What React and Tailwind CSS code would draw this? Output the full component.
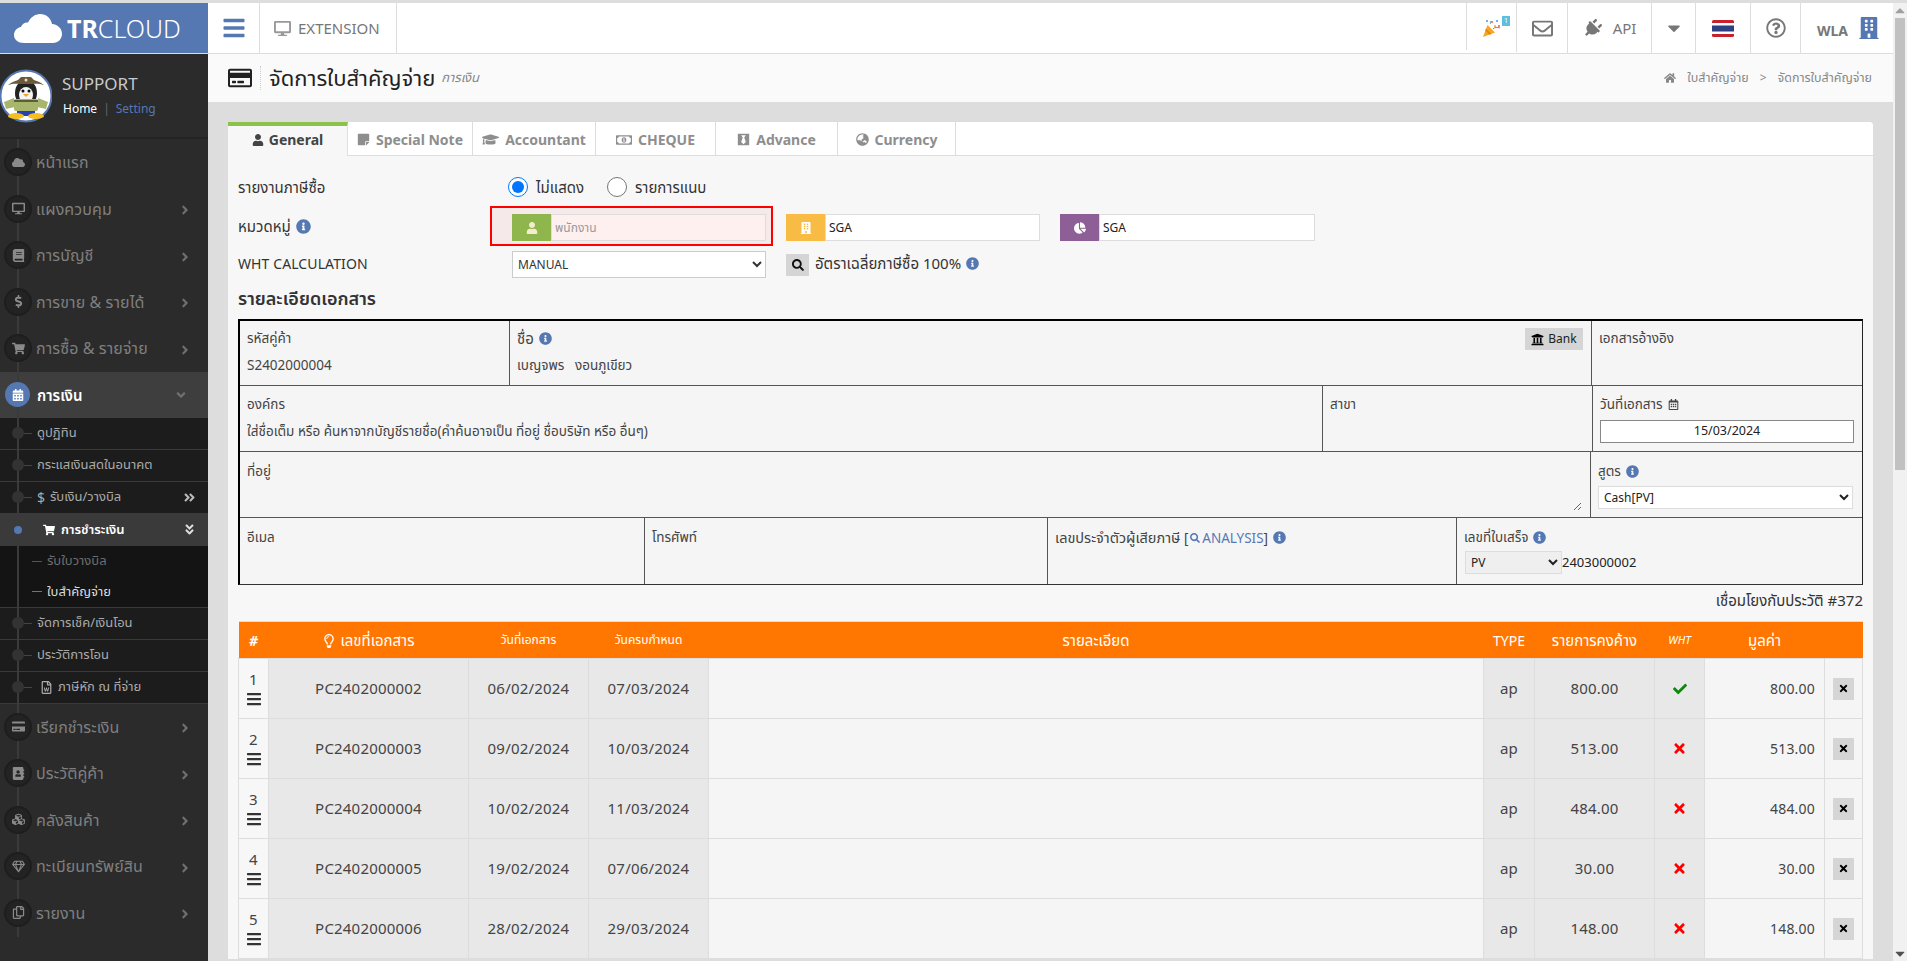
import React from 'react';
import {
  FaCloud, FaDesktop, FaBook, FaDollarSign, FaShoppingCart, FaCalendarAlt, FaCreditCard, FaRegCreditCard,
  FaAddressBook, FaCubes, FaRegGem, FaRegCopy, FaRegFileWord, FaAngleRight, FaAngleDown, FaAngleDoubleRight,
  FaAngleDoubleDown, FaBars, FaRegEnvelope, FaPlug, FaCaretDown, FaCaretUp, FaRegQuestionCircle, FaBuilding, FaHome,
  FaUser, FaStickyNote, FaGraduationCap, FaRegMoneyBillAlt, FaBlackTie, FaGlobeAsia, FaInfoCircle, FaChartPie,
  FaSearch, FaUniversity, FaRegCalendarAlt, FaRegLightbulb, FaCheck, FaTimes,
} from 'react-icons/fa';

const Logo = () => (
  <svg width="48" height="29" viewBox="0 0 48 29" fill="#fff">
    <path d="M10 29C4 29 0 25.5 0 21c0-4 3-7.500 7-8 1-3 4-5 7-4.500C16.500 3.500 21 0 26 0c6 0 11 4 12 10 6 .5 10 4.500 10 10 0 5-4 9-9 9z" />
  </svg>
);

const Penguin = () => (
  <svg width="52" height="54" viewBox="0 0 52 54" className="shrink-0">
    <circle cx="26" cy="27" r="25.500" fill="#fff" stroke="#5577b2" strokeWidth="2" />
    <ellipse cx="26" cy="24" rx="11" ry="13" fill="#222" />
    <ellipse cx="26" cy="26" rx="7" ry="8" fill="#f5f5f5" />
    <circle cx="23" cy="22" r="1.500" fill="#111" />
    <circle cx="29" cy="22" r="1.500" fill="#111" />
    <path d="M23 25h6l-3 3z" fill="#f4a020" />
    <path d="M8 16c6-2 7-1 18-1s12-1 18 1c-5-4-8-4-10-5l-3-3h-10l-3 3c-2 1-5 1-10 5z" fill="#6b5a3a" />
    <circle cx="26" cy="11" r="1.500" fill="#e8e0c0" />
    <rect x="14" y="30" width="24" height="12" rx="2" fill="#a8b56d" />
    <path d="M4 33l10-4 1 9-9 2zM48 33l-10-4-1 9 9 2z" fill="#a8b56d" />
    <rect x="14" y="31" width="24" height="2" fill="#5a6030" />
    <rect x="17" y="42" width="18" height="5" fill="#2541b2" />
    <ellipse cx="16" cy="47" rx="8" ry="3" fill="#f4c020" />
    <ellipse cx="36" cy="47" rx="8" ry="3" fill="#f4c020" />
  </svg>
);

const Party = () => (
  <svg width="18" height="18" viewBox="0 0 18 18">
    <path d="M0 18l4.500-12 7.500 7.500z" fill="#f5a623" />
    <path d="M3 9.500l5.500 5.500-2 .8-4.300-4.300z" fill="#e8831a" />
    <circle cx="4" cy="2" r="1" fill="#3b9be8" />
    <circle cx="9" cy="3" r="1" fill="#e85a4f" />
    <circle cx="14" cy="2" r="1" fill="#3b9be8" />
    <circle cx="16" cy="7" r="1" fill="#e85a4f" />
    <circle cx="12" cy="7" r="1" fill="#f5a623" />
    <path d="M10 10c2-2 4-2 7-1" stroke="#e85a4f" fill="none" strokeWidth="1" />
    <path d="M7 5c1-1 1-2 0-3" stroke="#3b9be8" fill="none" strokeWidth="1" />
  </svg>
);

const Flag = () => (
  <svg width="22" height="17" viewBox="0 0 22 17">
    <rect width="22" height="17" rx="1.500" fill="#c8202c" />
    <rect y="3" width="22" height="11" fill="#fff" />
    <rect y="5.500" width="22" height="6" fill="#2c3f80" />
  </svg>
);

const mainMenu1 = [
  { t: 'หน้าแรก', I: FaCloud, arrow: false },
  { t: 'แผงควบคุม', I: FaDesktop, arrow: true },
  { t: 'การบัญชี', I: FaBook, arrow: true },
  { t: 'การขาย & รายได้', I: FaDollarSign, arrow: true },
  { t: 'การซื้อ & รายจ่าย', I: FaShoppingCart, arrow: true },
];
const mainMenu2 = [
  { t: 'เรียกชำระเงิน', I: FaCreditCard },
  { t: 'ประวัติคู่ค้า', I: FaAddressBook },
  { t: 'คลังสินค้า', I: FaCubes },
  { t: 'ทะเบียนทรัพย์สิน', I: FaRegGem },
  { t: 'รายงาน', I: FaRegCopy },
];

const MenuRow = ({ t, I, arrow = true }) => (
  <div className="h-[46.5px] flex items-center pl-[4px] pr-[16px]">
    <span className="relative z-10 w-[28px] h-[28px] rounded-full bg-[#232323] border-2 border-[#1e1e1e] flex items-center justify-center text-[#8a8a8a] text-[13px] shrink-0">
      <I />
    </span>
    <span className="ml-[4px] flex-1 text-[16px] text-[#7f7f7f] tracking-[0.1px]">{t}</span>
    {arrow && <FaAngleRight className="text-[#6f6f6f] text-[14px] mt-[3px]" />}
  </div>
);

const Dot = () => (
  <>
    <span className="relative z-10 ml-[12px] w-[12px] h-[12px] rounded-full bg-[#333] shrink-0" />
    <span className="w-[8px] h-px bg-[#444] mr-[5px] shrink-0" />
  </>
);

const SubRow = ({ children, extra }) => (
  <div className="h-[32px] flex items-center border-b border-[#3a3a3a] bg-[#1c1c1c] text-[#ababab] text-[13px] pr-[12px]">
    <Dot />
    <span className="flex-1 flex items-center">{children}</span>
    {extra}
  </div>
);

const Sidebar = () => (
  <aside className="w-[208px] bg-[#2b2b2b] shrink-0 relative h-full">
    <div className="h-[85px] flex items-center border-b-[2px] border-[#232323]">
      <Penguin />
      <div className="ml-[10px]">
        <div className="text-[#c9c9c9] text-[17px] leading-[22px]">SUPPORT</div>
        <div className="text-[12px] mt-[5px] leading-[18px] ml-[1px]">
          <span className="text-white">Home</span>
          <span className="text-[#666] mx-[6px]">|</span>
          <span className="text-[#5578b3]">Setting</span>
        </div>
      </div>
    </div>
    <div className="relative">
      <span className="absolute left-[17px] top-0 w-[2px] h-[798px] bg-[#3a3a3a]" />
      {mainMenu1.map((m) => <MenuRow key={m.t} {...m} />)}
      <div className="h-[46px] bg-[#3e3e3e] flex items-center pl-[5px] pr-[20px]">
        <span className="relative z-10 w-[25px] h-[25px] rounded-full bg-[#5578b3] flex items-center justify-center text-white text-[12px]">
          <FaCalendarAlt />
        </span>
        <span className="ml-[7px] flex-1 text-white text-[15px] font-semibold pt-[2px]">การเงิน</span>
        <FaAngleDown className="text-[#6f6f6f] text-[14px]" />
      </div>
      <SubRow>ดูปฏิทิน</SubRow>
      <SubRow>กระแสเงินสดในอนาคต</SubRow>
      <SubRow extra={<FaAngleDoubleRight className="text-[#bbb] text-[13px]" />}>
        <span className="mr-[5px] text-[14px]">$</span>รับเงิน/วางบิล
      </SubRow>
      <div className="h-[32px] bg-[#3a3a3a] flex items-center text-white text-[13px] pr-[12px] font-semibold">
        <span className="relative z-10 ml-[14px] w-[8px] h-[8px] rounded-full bg-[#5578b3]" />
        <FaShoppingCart className="ml-[21px] text-[12px]" />
        <span className="ml-[6px] flex-1">การชำระเงิน</span>
        <FaAngleDoubleDown className="text-[#ddd] text-[13px]" />
      </div>
      <div className="bg-[#141414] border-b border-[#3a3a3a]">
        <div className="h-[31px] flex items-center text-[13px] text-[#6f6f6f] pl-[32px]">
          <span className="w-[10px] h-px bg-[#555] mr-[5px]" />รับใบวางบิล
        </div>
        <div className="h-[30px] flex items-center text-[13px] text-[#ddd] pl-[32px]">
          <span className="w-[10px] h-px bg-[#5578b3] mr-[5px]" />ใบสำคัญจ่าย
        </div>
      </div>
      <SubRow>จัดการเช็ค/เงินโอน</SubRow>
      <SubRow>ประวัติการโอน</SubRow>
      <SubRow>
        <FaRegFileWord className="ml-[3px] mr-[5px] text-[13px]" />ภาษีหัก ณ ที่จ่าย
      </SubRow>
      <div>
        {mainMenu2.map((m) => <MenuRow key={m.t} {...m} />)}
      </div>
    </div>
  </aside>
);

const HCell = ({ className, children }) => (
  <div className={`h-[50px] border-r border-[#ddd] flex items-center justify-center text-[#777] ${className}`}>{children}</div>
);

const Header = () => (
  <header className="h-[51px] flex border-b border-[#ddd] bg-white shrink-0">
    <div className="w-[208px] bg-[#5578b3] h-[50px] flex items-center pl-[14px] shrink-0">
      <Logo />
      <span className="ml-[5px] text-white text-[25px] leading-none font-light"><b className="font-bold">TR</b>CLOUD</span>
    </div>
    <div className="w-[52px] h-[50px] border-r border-[#ddd] flex items-center justify-center text-[#5578b3] text-[24px] shrink-0">
      <FaBars />
    </div>
    <div className="w-[137px] h-[50px] border-r border-[#ddd] flex items-center pl-[14px] text-[#777] text-[15px] shrink-0">
      <FaDesktop className="text-[17px] mr-[7px] text-[#999]" />EXTENSION
    </div>
    <div className="flex-1 border-r border-[#ddd] h-[47px]" />
    <div className="w-[50px] h-[49px] border-r border-[#ddd] relative flex items-center justify-center">
      <Party />
      <span className="absolute left-[35px] top-[13px] w-[8px] h-[10px] bg-[#5bc0de] text-white text-[7px] leading-[10px] text-center">1</span>
    </div>
    <HCell className="w-[51px] text-[21px]"><FaRegEnvelope /></HCell>
    <HCell className="w-[84px] text-[15px]"><FaPlug className="text-[19px] mr-[11px] rotate-45" />API</HCell>
    <HCell className="w-[44px] text-[20px]"><FaCaretDown /></HCell>
    <HCell className="w-[55px]"><Flag /></HCell>
    <HCell className="w-[50px] text-[20px]"><FaRegQuestionCircle /></HCell>
    <div className="w-[92px] h-[50px] flex items-center pl-[16px] text-[#777]">
      <span className="text-[14px] font-bold mt-[4px]">WLA</span>
      <FaBuilding className="ml-[10px] text-[22px] text-[#5578b3]" />
    </div>
  </header>
);

const Title = () => (
  <div className="h-[48px] bg-[#fafafa] flex items-center pl-[20px] pr-[21px] shrink-0">
    <FaRegCreditCard className="text-[24px] text-[#222]" />
    <span className="ml-[8px] h-[24px] border-l border-dotted border-[#ccc]" />
    <span className="ml-[8px] text-[22px] text-[#222] pb-[2px]">จัดการใบสำคัญจ่าย</span>
    <span className="ml-[6px] text-[13px] italic text-[#888]">การเงิน</span>
    <span className="flex-1" />
    <FaHome className="text-[12px] text-[#888]" />
    <span className="ml-[11px] text-[12.5px] text-[#888]">ใบสำคัญจ่าย</span>
    <span className="mx-[11px] text-[12px] text-[#888]">&gt;</span>
    <span className="text-[12.5px] text-[#888]">จัดการใบสำคัญจ่าย</span>
  </div>
);

const tabs = [
  { t: 'Special Note', I: FaStickyNote, w: 'w-[125px]', ic: 'text-[13px]' },
  { t: 'Accountant', I: FaGraduationCap, w: 'w-[123px]', ic: 'text-[17px]' },
  { t: 'CHEQUE', I: FaRegMoneyBillAlt, w: 'w-[120px]', ic: 'text-[16px]' },
  { t: 'Advance', I: FaBlackTie, w: 'w-[122px]', ic: 'text-[13px]' },
  { t: 'Currency', I: FaGlobeAsia, w: 'w-[118px]', ic: 'text-[13px]' },
];

const Tabs = () => (
  <div className="flex h-[34px]">
    <div className="w-[120px] border-t-[4px] border-[#8bc34a] border-r border-r-[#e0e0e0] flex items-center justify-center gap-[5px] pb-[3px] text-[14px] font-bold text-[#444] bg-[#f7f7f7]">
      <FaUser className="text-[12px]" />General
    </div>
    {tabs.map(({ t, I, w, ic }) => (
      <div key={t} className={`${w} border-r border-b border-[#ddd] bg-white flex items-center justify-center gap-[6px] pt-[2px] text-[14px] font-bold text-[#8e8e8e]`}>
        <I className={ic} />{t}
      </div>
    ))}
    <div className="flex-1 border-b border-[#ddd] bg-white rounded-tr-[4px]" />
  </div>
);

const Info = ({ className = '' }) => <FaInfoCircle className={`inline-block text-[#5578b3] text-[13px] ${className}`} />;

const InputGroup = ({ color, I, value, placeholder, w, pink, iconCls = 'text-white' }) => (
  <div className={`flex h-[27px] ${w}`}>
    <span className={`${color} w-[39px] shrink-0 flex items-center justify-center ${iconCls} text-[12px]`}><I /></span>
    <div className={`flex-1 border border-[#ddd] flex items-center pl-[3px] text-[12px] ${pink ? 'bg-[#fff0f0] text-[#999]' : 'bg-white text-[#222]'}`}>
      {value || placeholder}
    </div>
  </div>
);

const Form = () => (
  <div className="text-[15px] text-[#333]">
    <div className="flex items-center h-[22px] mt-[20px]">
      <span className="w-[270px]">รายงานภาษีซื้อ</span>
      <input type="radio" name="rp" defaultChecked className="w-[20px] h-[20px] m-0" />
      <span className="ml-[8px] w-[71px]">ไม่แสดง</span>
      <input type="radio" name="rp" className="w-[20px] h-[20px] m-0" />
      <span className="ml-[8px]">รายการแนบ</span>
    </div>
    <div className="flex items-center h-[40px] mt-[8px]">
      <span className="w-[252px] flex items-center gap-[5px]">หมวดหมู่ <Info className="!text-[15px]" /></span>
      <div className="w-[283px] h-[40px] border-2 border-[#f00] bg-[#f5e9e9] flex items-center pl-[20px] pt-[3px]">
        <InputGroup color="bg-[#8fb54d]" I={FaUser} placeholder="พนักงาน" pink w="w-[254px]" iconCls="text-[#f5ecd0]" />
      </div>
      <div className="ml-[13px] mt-[3px]"><InputGroup color="bg-[#f8bb44]" I={FaBuilding} value="SGA" w="w-[254px]" /></div>
      <div className="ml-[20px] mt-[3px]"><InputGroup color="bg-[#8e5e96]" I={FaChartPie} value="SGA" w="w-[255px]" /></div>
    </div>
    <div className="flex items-center h-[27px] mt-[5px]">
      <span className="w-[274px] -mt-[3px] text-[14px] tracking-[0.1px]">WHT CALCULATION</span>
      <select className="w-[254px] h-[27px] border border-[#ccc] bg-white text-[12px] pl-[1px]">
        <option>MANUAL</option>
      </select>
      <span className="ml-[20px] w-[23px] h-[22px] bg-[#d5d5d5] flex items-center justify-center text-[12px] text-[#111]"><FaSearch /></span>
      <span className="ml-[6px] -mt-[3px]">อัตราเฉลี่ยภาษีซื้อ 100%</span>
      <Info className="ml-[5px] -mt-[3px]" />
    </div>
    <div className="h-[41px] flex items-center text-[18px] font-semibold text-[#333]">รายละเอียดเอกสาร</div>
  </div>
);

const Cell = ({ w, label, value, children, last, pt = 'pt-[9px]' }) => (
  <div className={`${w} px-[7px] ${pt} ${last ? '' : 'border-r border-[#555]'} relative`}>
    {label && <div className="text-[13.5px] leading-[20px] text-[#444] flex items-center gap-[5px]">{label}</div>}
    {value && <div className="text-[13.5px] leading-[20px] mt-[7px] text-[#444]">{value}</div>}
    {children}
  </div>
);

const DocTable = () => (
  <div className="border-l-2 border-r border-b border-t-2 border-l-black border-t-black border-r-[#222] border-b-[#333] bg-[#f5f5f5] text-[#333]">
    <div className="flex h-[65px] border-b border-[#555]">
      <Cell pt="pt-[7px]" w="w-[270px]" label="รหัสคู่ค้า" value="S2402000004" />
      <Cell pt="pt-[7px]" w="w-[1082px]" label={<><span className="text-[15px]">ชื่อ</span> <Info /></>} value={'เบญจพร\u00a0\u00a0\u00a0งอนภูเขียว'}>
        <div className="absolute right-[8px] top-[7px] w-[58px] h-[22px] bg-[#d5d5d5] flex items-center justify-center gap-[4px] text-[12px] text-[#222]">
          <FaUniversity className="text-[13px] text-black" />Bank
        </div>
      </Cell>
      <Cell pt="pt-[7px]" w="flex-1" label="เอกสารอ้างอิง" last />
    </div>
    <div className="flex h-[66px] border-b border-[#555]">
      <Cell pt="pt-[8px]" w="w-[1083px]" label="องค์กร" value="ใส่ชื่อเต็ม หรือ ค้นหาจากบัญชีรายชื่อ(คำค้นอาจเป็น ที่อยู่ ชื่อบริษัท หรือ อื่นๆ)" />
      <Cell pt="pt-[8px]" w="w-[270px]" label="สาขา" />
      <Cell pt="pt-[8px]" w="flex-1" label={<>วันที่เอกสาร <FaRegCalendarAlt className="text-[11px]" /></>} last>
        <div className="mt-[6px] w-[254px] h-[23px] border border-[#888] bg-white flex items-center justify-center text-[12.5px] text-[#222]">15/03/2024</div>
      </Cell>
    </div>
    <div className="flex h-[66px] border-b border-[#555]">
      <div className="w-[1351px] border-r border-[#555] px-[7px] pt-[9px] flex flex-col relative">
        <div className="text-[13.5px] leading-[20px] text-[#444]">ที่อยู่</div>
        <textarea readOnly className="absolute right-[8px] bottom-[6px] w-[300px] h-[40px] bg-transparent outline-none" />
      </div>
      <Cell w="flex-1" label={<>สูตร <Info /></>} last>
        <select className="mt-[5px] w-[255px] h-[23px] border border-[#ddd] bg-white text-[12px] text-[#222] pl-[1px]">
          <option>Cash[PV]</option>
        </select>
      </Cell>
    </div>
    <div className="flex h-[66px]">
      <Cell w="w-[405px]" label="อีเมล" />
      <Cell w="w-[403px]" label="โทรศัพท์" />
      <Cell w="w-[409px]" label={<><span><span className="text-[14.500px]">เลขประจำตัวผู้เสียภาษี</span> [<span className="text-[#5578b3]"><FaSearch className="inline-block text-[10px] mx-[2px] mb-[2px]" />ANALYSIS</span>]</span> <Info /></>} />
      <Cell w="flex-1" label={<>เลขที่ใบเสร็จ <Info /></>} last>
        <div className="mt-[4px] flex items-center text-[13px] text-[#222]">
          <select className="ml-[1px] w-[97px] h-[23px] border border-[#ddd] bg-[#efefef] text-[12px] pl-[1px]">
            <option>PV</option>
          </select>
          2403000002
        </div>
      </Cell>
    </div>
  </div>
);

const rows = [
  ['1', 'PC2402000002', '06/02/2024', '07/03/2024', '800.00', true],
  ['2', 'PC2402000003', '09/02/2024', '10/03/2024', '513.00', false],
  ['3', 'PC2402000004', '10/02/2024', '11/03/2024', '484.00', false],
  ['4', 'PC2402000005', '19/02/2024', '07/06/2024', '30.00', false],
  ['5', 'PC2402000006', '28/02/2024', '29/03/2024', '148.00', false],
];

const td = 'border border-[#ddd] text-center text-[15px] tracking-[0.2px] text-[#444]';

const OrderTable = () => (
  <table className="table-fixed border-collapse w-[1624px]">
    <colgroup>
      <col className="w-[30px]" />
      <col className="w-[200px]" />
      <col className="w-[120px]" />
      <col className="w-[120px]" />
      <col className="w-[775px]" />
      <col className="w-[51px]" />
      <col className="w-[120px]" />
      <col className="w-[50px]" />
      <col className="w-[120px]" />
      <col className="w-[38px]" />
    </colgroup>
    <thead>
      <tr className="h-[37px] bg-[#ff7700] text-white border-t border-[#ddd] text-center">
        <th className="text-[14px] italic font-bold">#</th>
        <th className="text-[15px] font-normal"><FaRegLightbulb className="inline-block text-[14px] mr-[4px] mb-[2px]" />เลขที่เอกสาร</th>
        <th className="text-[12px] font-normal">วันที่เอกสาร</th>
        <th className="text-[12px] font-normal">วันครบกำหนด</th>
        <th className="text-[15px] font-normal">รายละเอียด</th>
        <th className="text-[14px] font-normal">TYPE</th>
        <th className="text-[15px] font-normal">รายการคงค้าง</th>
        <th className="text-[11px] font-normal italic">WHT</th>
        <th className="text-[15px] font-normal">มูลค่า</th>
        <th />
      </tr>
    </thead>
    <tbody>
      {rows.map(([n, doc, d1, d2, amt, ok]) => (
        <tr key={n} className="h-[60px]">
          <td className={`${td} bg-[#f7f7f7]`}>
            <div className="flex flex-col items-center leading-[20px] text-[15px] -mt-[2px]">{n}<FaBars className="text-[16px] text-[#333] mt-[2px]" /></div>
          </td>
          <td className={`${td} bg-[#e8e8e8]`}>{doc}</td>
          <td className={`${td} bg-[#e8e8e8]`}>{d1}</td>
          <td className={`${td} bg-[#e8e8e8]`}>{d2}</td>
          <td className={`${td} bg-[#f5f5f5]`} />
          <td className={`${td} bg-[#e8e8e8]`}>ap</td>
          <td className={`${td} bg-[#e8e8e8]`}>{amt}</td>
          <td className={`${td} bg-[#e8e8e8]`}>
            {ok ? <FaCheck className="inline-block text-[14px] text-[#0a8a0a] mb-[3px]" /> : <FaTimes className="inline-block text-[15px] text-[#f00] mb-[3px]" />}
          </td>
          <td className={`${td} bg-[#f5f5f5] !text-right pr-[9px] !text-[14px]`}>{amt}</td>
          <td className={`${td} bg-[#f5f5f5]`}>
            <span className="inline-flex w-[21px] h-[22px] bg-[#d5d5d5] items-center justify-center text-[11px] text-black"><FaTimes /></span>
          </td>
        </tr>
      ))}
    </tbody>
  </table>
);

const Scrollbar = () => (
  <div className="w-[14px] bg-[#f1f1f1] h-full flex flex-col items-center shrink-0 relative">
    <FaCaretUp className="text-[10px] text-[#a0a0a0] h-[15px] shrink-0" />
    <div className="w-[10px] h-[452px] bg-[#c1c1c1]" />
    <span className="flex-1" />
    <FaCaretDown className="text-[10px] text-[#505050] h-[15px] shrink-0" />
  </div>
);

export default function App() {
  return (
    <div className="w-[1907px] h-[961px] overflow-hidden flex flex-col bg-[#ddd] font-['Noto_Sans','Noto_Sans_Thai',sans-serif]">
      <div className="h-[3px] bg-[#ddd] shrink-0" />
      <div className="flex flex-1 min-h-0">
        <div className="flex-1 min-w-0 flex flex-col overflow-hidden">
          <Header />
          <div className="flex flex-1 min-h-0">
            <Sidebar />
            <main className="flex-1 min-w-0 overflow-hidden">
              <Title />
              <div className="mt-[20px] ml-[20px] mr-[20px] bg-[#f7f7f7] rounded-t-[4px]">
                <Tabs />
                <div className="px-[10px]">
                  <Form />
                  <DocTable />
                  <div className="h-[36px] flex items-center justify-end pb-[5px] text-[15px] text-[#333]">เชื่อมโยงกับประวัติ #372</div>
                  <OrderTable />
                </div>
              </div>
            </main>
          </div>
        </div>
        <Scrollbar />
      </div>
    </div>
  );
}
